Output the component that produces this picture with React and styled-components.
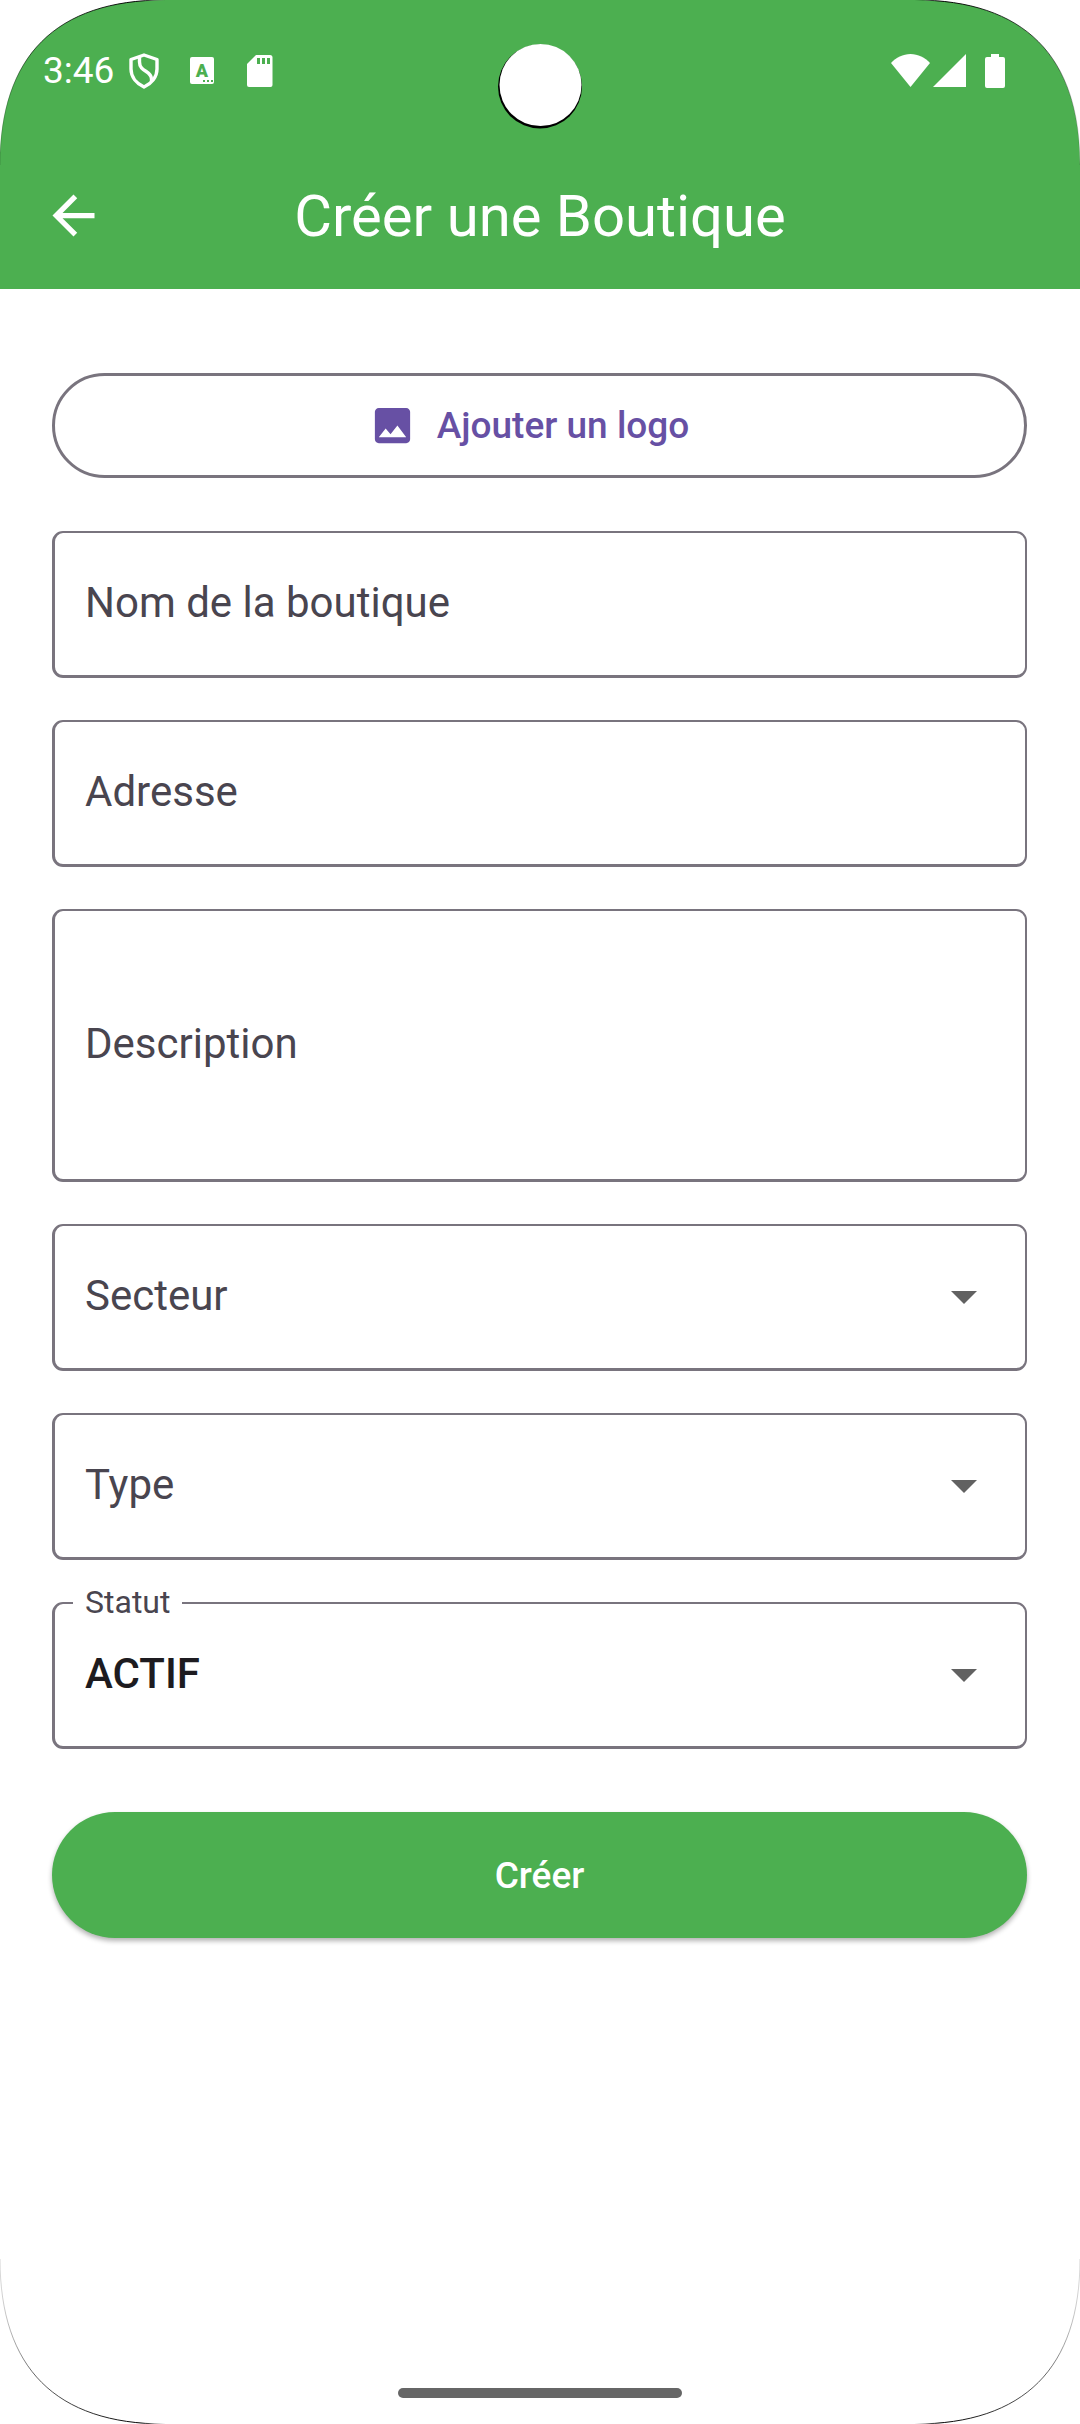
import React from 'react';
import styled, { createGlobalStyle } from 'styled-components';

const GlobalStyle = createGlobalStyle`
  * {
    box-sizing: border-box;
  }

  body {
    margin: 0;
    background-color: #FFFFFF;
    font-family: 'Roboto', sans-serif;
  }

  input, textarea, select, button {
    font-family: inherit;
  }
`;

const Screen = styled.div`
  position: relative;
  display: flex;
  flex-direction: column;
  min-height: 100vh;
  overflow: hidden;
  background-color: #FFFFFF;
`;

const Header = styled.header`
  background-color: #4CAF50;
  color: #FFFFFF;
`;

const StatusBar = styled.div`
  display: flex;
  align-items: center;
  justify-content: space-between;
  height: 142px;
  padding: 0 75px 0 43px;
`;

const StatusGroup = styled.div`
  display: flex;
  align-items: center;
  gap: ${({ $gap }) => $gap}px;
`;

const Clock = styled.time`
  font-size: 37px;
  line-height: 44px;
`;

const Camera = styled.svg`
  position: absolute;
  top: 42px;
  left: 50%;
  margin-left: -44px;
`;

const AppBar = styled.div`
  display: grid;
  grid-template-columns: 64px 1fr 64px;
  align-items: center;
  height: 147px;
  padding: 0 42px;
`;

const BackButton = styled.button`
  display: flex;
  padding: 0;
  border: none;
  background: none;
  color: inherit;
`;

const Title = styled.h1`
  margin: 0;
  font-size: 58px;
  font-weight: 400;
  line-height: 66px;
  text-align: center;
`;

const Form = styled.form`
  display: flex;
  flex-direction: column;
  gap: 42px;
  padding: 84px 53px 0 52px;
`;

const LogoButton = styled.button`
  display: flex;
  align-items: center;
  justify-content: center;
  gap: 21px;
  height: 105px;
  margin-bottom: 11px;
  padding: 0 63px 0 42px;
  border: 3px solid #79747E;
  border-radius: 53px;
  background: none;
  font-size: 37px;
  font-weight: 500;
  color: #6750A4;
`;

/* label and control share the single grid cell */
const StyledField = styled.div`
  position: relative;
  display: grid;
  align-items: center;
  height: ${({ $tall }) => ($tall ? 273 : 147)}px;
  border: solid #79747E;
  border-width: 2px 2px 3px 3px;
  border-radius: 11px;

  > * {
    grid-area: 1 / 1;
  }
`;

const Label = styled.label`
  padding: 0 30px 2px;
  font-size: 42px;
  line-height: 50px;
  color: #49454F;
  pointer-events: none;
`;

const FloatingLabel = styled.label`
  position: absolute;
  top: -20px;
  left: 18px;
  padding: 0 12px;
  background-color: #FFFFFF;
  font-size: 32px;
  line-height: 36px;
  color: #49454F;
`;

const Input = styled.input`
  width: 100%;
  height: 100%;
  padding: 0 30px 4px;
  border: none;
  outline: none;
  background: none;
  font-size: 42px;
  color: #1D1B20;
`;

const TextArea = styled(Input)`
  padding-top: 42px;
  resize: none;
`;

const Select = styled(Input)`
  appearance: none;
  font-weight: 500;
`;

const Caret = styled.svg`
  justify-self: end;
  margin-right: 48px;
  pointer-events: none;
`;

const SubmitButton = styled.button`
  height: 126px;
  margin-top: 21px;
  padding: 0;
  border: none;
  border-radius: 63px;
  background-color: #4CAF50;
  box-shadow: 0 3px 5px rgba(0, 0, 0, 0.3);
  font-size: 37px;
  font-weight: 500;
  color: #FFFFFF;
`;

const HomeIndicator = styled.div`
  width: 284px;
  height: 10px;
  margin: auto auto 26px;
  border-radius: 5px;
  background-color: #666666;
`;

const StyledCorner = styled.svg`
  position: absolute;
  ${({ $bottom }) => ($bottom ? 'bottom' : 'top')}: 0;
  ${({ $right }) => ($right ? 'right' : 'left')}: 0;
  transform: scale(${({ $right }) => ($right ? -1 : 1)}, ${({ $bottom }) => ($bottom ? -1 : 1)});
  pointer-events: none;
`;

const Corner = ({ id, right, bottom }) => (
  <StyledCorner $right={right} $bottom={bottom} width="166" height="166" viewBox="0 0 166 166" aria-hidden="true">
    <defs>
      <linearGradient id={id} gradientUnits="userSpaceOnUse" x1="0" y1="0" x2="166" y2="0">
        <stop offset="0" stopColor="#000" stopOpacity="0.15" />
        <stop offset="0.2" stopColor="#000" stopOpacity="0.6" />
        <stop offset="0.85" stopColor="#000" />
        <stop offset="1" stopColor="#000" stopOpacity="0" />
      </linearGradient>
    </defs>
    <path d="M0 0H165C56 0 0 56 0 165Z" fill="#FFFFFF" />
    <path d="M165 0C56 0 0 56 0 165" fill="none" stroke={`url(#${id})`} />
  </StyledCorner>
);

const ShieldIcon = () => (
  <svg width="58" height="36" viewBox="0 0 58 36" fill="none" stroke="#FFFFFF" strokeWidth="3.4" aria-hidden="true">
    <path d="M29 2L42 6.5V16C42 24 36.5 30.5 29 34C21.5 30.5 16 24 16 16V6.5Z" strokeLinejoin="round" />
    <path d="M24.5 4V9C24.5 19 36.5 17.5 36.5 26V29" />
  </svg>
);

const KeyboardIcon = () => (
  <svg width="58" height="36" viewBox="0 0 58 36" aria-hidden="true">
    <rect x="17" y="4" width="24" height="27" rx="2" fill="#FFFFFF" />
    <text x="29" y="24" textAnchor="middle" fontSize="18" fontWeight="900" fill="#4CAF50">A</text>
    <path d="M30 27h2v2h-2zM34 27h2v2h-2zM38 27h2v2h-2z" fill="#4CAF50" />
  </svg>
);

const SdCardIcon = () => (
  <svg width="58" height="36" viewBox="0 0 58 36" aria-hidden="true">
    <path d="M25 2H39Q41.5 2 41.5 4.5V32Q41.5 34 39.5 34H18Q16 34 16 32V11Z" fill="#FFFFFF" />
    <path d="M26 5h3v6h-3zM31 5h3v6h-3zM36 5h3v6h-3z" fill="#4CAF50" />
  </svg>
);

const WifiIcon = () => (
  <svg width="39" height="34" viewBox="0 0 39 34" fill="#FFFFFF" aria-hidden="true">
    <path d="M19.5 33L0 9C5 3.5 12 0 19.5 0S34 3.5 39 9Z" />
  </svg>
);

const SignalIcon = () => (
  <svg width="33" height="34" viewBox="0 0 33 34" fill="#FFFFFF" aria-hidden="true">
    <path d="M33 0V33H0Z" />
  </svg>
);

const BatteryIcon = () => (
  <svg width="36" height="34" viewBox="0 0 36 34" fill="#FFFFFF" aria-hidden="true">
    <path d="M22 0H30V3H34Q36 3 36 5V32Q36 34 34 34H18Q16 34 16 32V5Q16 3 18 3H22Z" />
  </svg>
);

const Field = ({ id, label, tall }) => (
  <StyledField $tall={tall}>
    <Label htmlFor={id}>{label}</Label>
    {tall ? <TextArea as="textarea" id={id} name={id} /> : <Input id={id} name={id} type="text" />}
  </StyledField>
);

const SelectField = ({ id, label, value, options }) => (
  <StyledField>
    {value
      ? <FloatingLabel htmlFor={id}>{label}</FloatingLabel>
      : <Label htmlFor={id}>{label}</Label>}
    <Select as="select" id={id} name={id} defaultValue={value || ''}>
      {!value && <option value="" />}
      {options.map(option => <option key={option}>{option}</option>)}
    </Select>
    <Caret width="26" height="13" viewBox="0 0 26 13" aria-hidden="true">
      <path d="M0 0H26L13 13Z" fill="#616161" />
    </Caret>
  </StyledField>
);

const App = () => {
  return (
    <Screen>
      <GlobalStyle />
      <Header>
        <StatusBar>
          <StatusGroup $gap={1}>
            <Clock>3:46</Clock>
            <StatusGroup $gap={0}>
              <ShieldIcon />
              <KeyboardIcon />
              <SdCardIcon />
            </StatusGroup>
          </StatusGroup>
          <StatusGroup $gap={3}>
            <WifiIcon />
            <SignalIcon />
            <BatteryIcon />
          </StatusGroup>
        </StatusBar>
        <AppBar>
          <BackButton type="button" aria-label="Retour">
            <svg width="63" height="63" viewBox="0 0 24 24" fill="currentColor" aria-hidden="true">
              <path d="M20 11H7.83l5.59-5.59L12 4l-8 8 8 8 1.41-1.41L7.83 13H20v-2z" />
            </svg>
          </BackButton>
          <Title>Créer une Boutique</Title>
        </AppBar>
      </Header>
      <Form>
        <LogoButton type="button">
          <svg width="47" height="47" viewBox="0 0 24 24" fill="currentColor" aria-hidden="true">
            <path d="M21 19V5c0-1.1-.9-2-2-2H5c-1.1 0-2 .9-2 2v14c0 1.1.9 2 2 2h14c1.1 0 2-.9 2-2zM8.5 13.5l2.5 3.01L14.5 12l4.5 6H5l3.5-4.5z" />
          </svg>
          Ajouter un logo
        </LogoButton>
        <Field id="nom" label="Nom de la boutique" />
        <Field id="adresse" label="Adresse" />
        <Field id="description" label="Description" tall />
        <SelectField id="secteur" label="Secteur" options={[]} />
        <SelectField id="type" label="Type" options={[]} />
        <SelectField id="statut" label="Statut" value="ACTIF" options={['ACTIF']} />
        <SubmitButton type="submit">Créer</SubmitButton>
      </Form>
      <HomeIndicator />
      <Camera width="88" height="90" viewBox="0 0 88 90" aria-hidden="true">
        <circle cx="44" cy="44.5" r="42" fill="#000000" />
        <circle cx="44.5" cy="43" r="41" fill="#FFFFFF" />
      </Camera>
      <Corner id="corner-tl" />
      <Corner id="corner-tr" right />
      <Corner id="corner-bl" bottom />
      <Corner id="corner-br" right bottom />
    </Screen>
  );
};

export default App;
